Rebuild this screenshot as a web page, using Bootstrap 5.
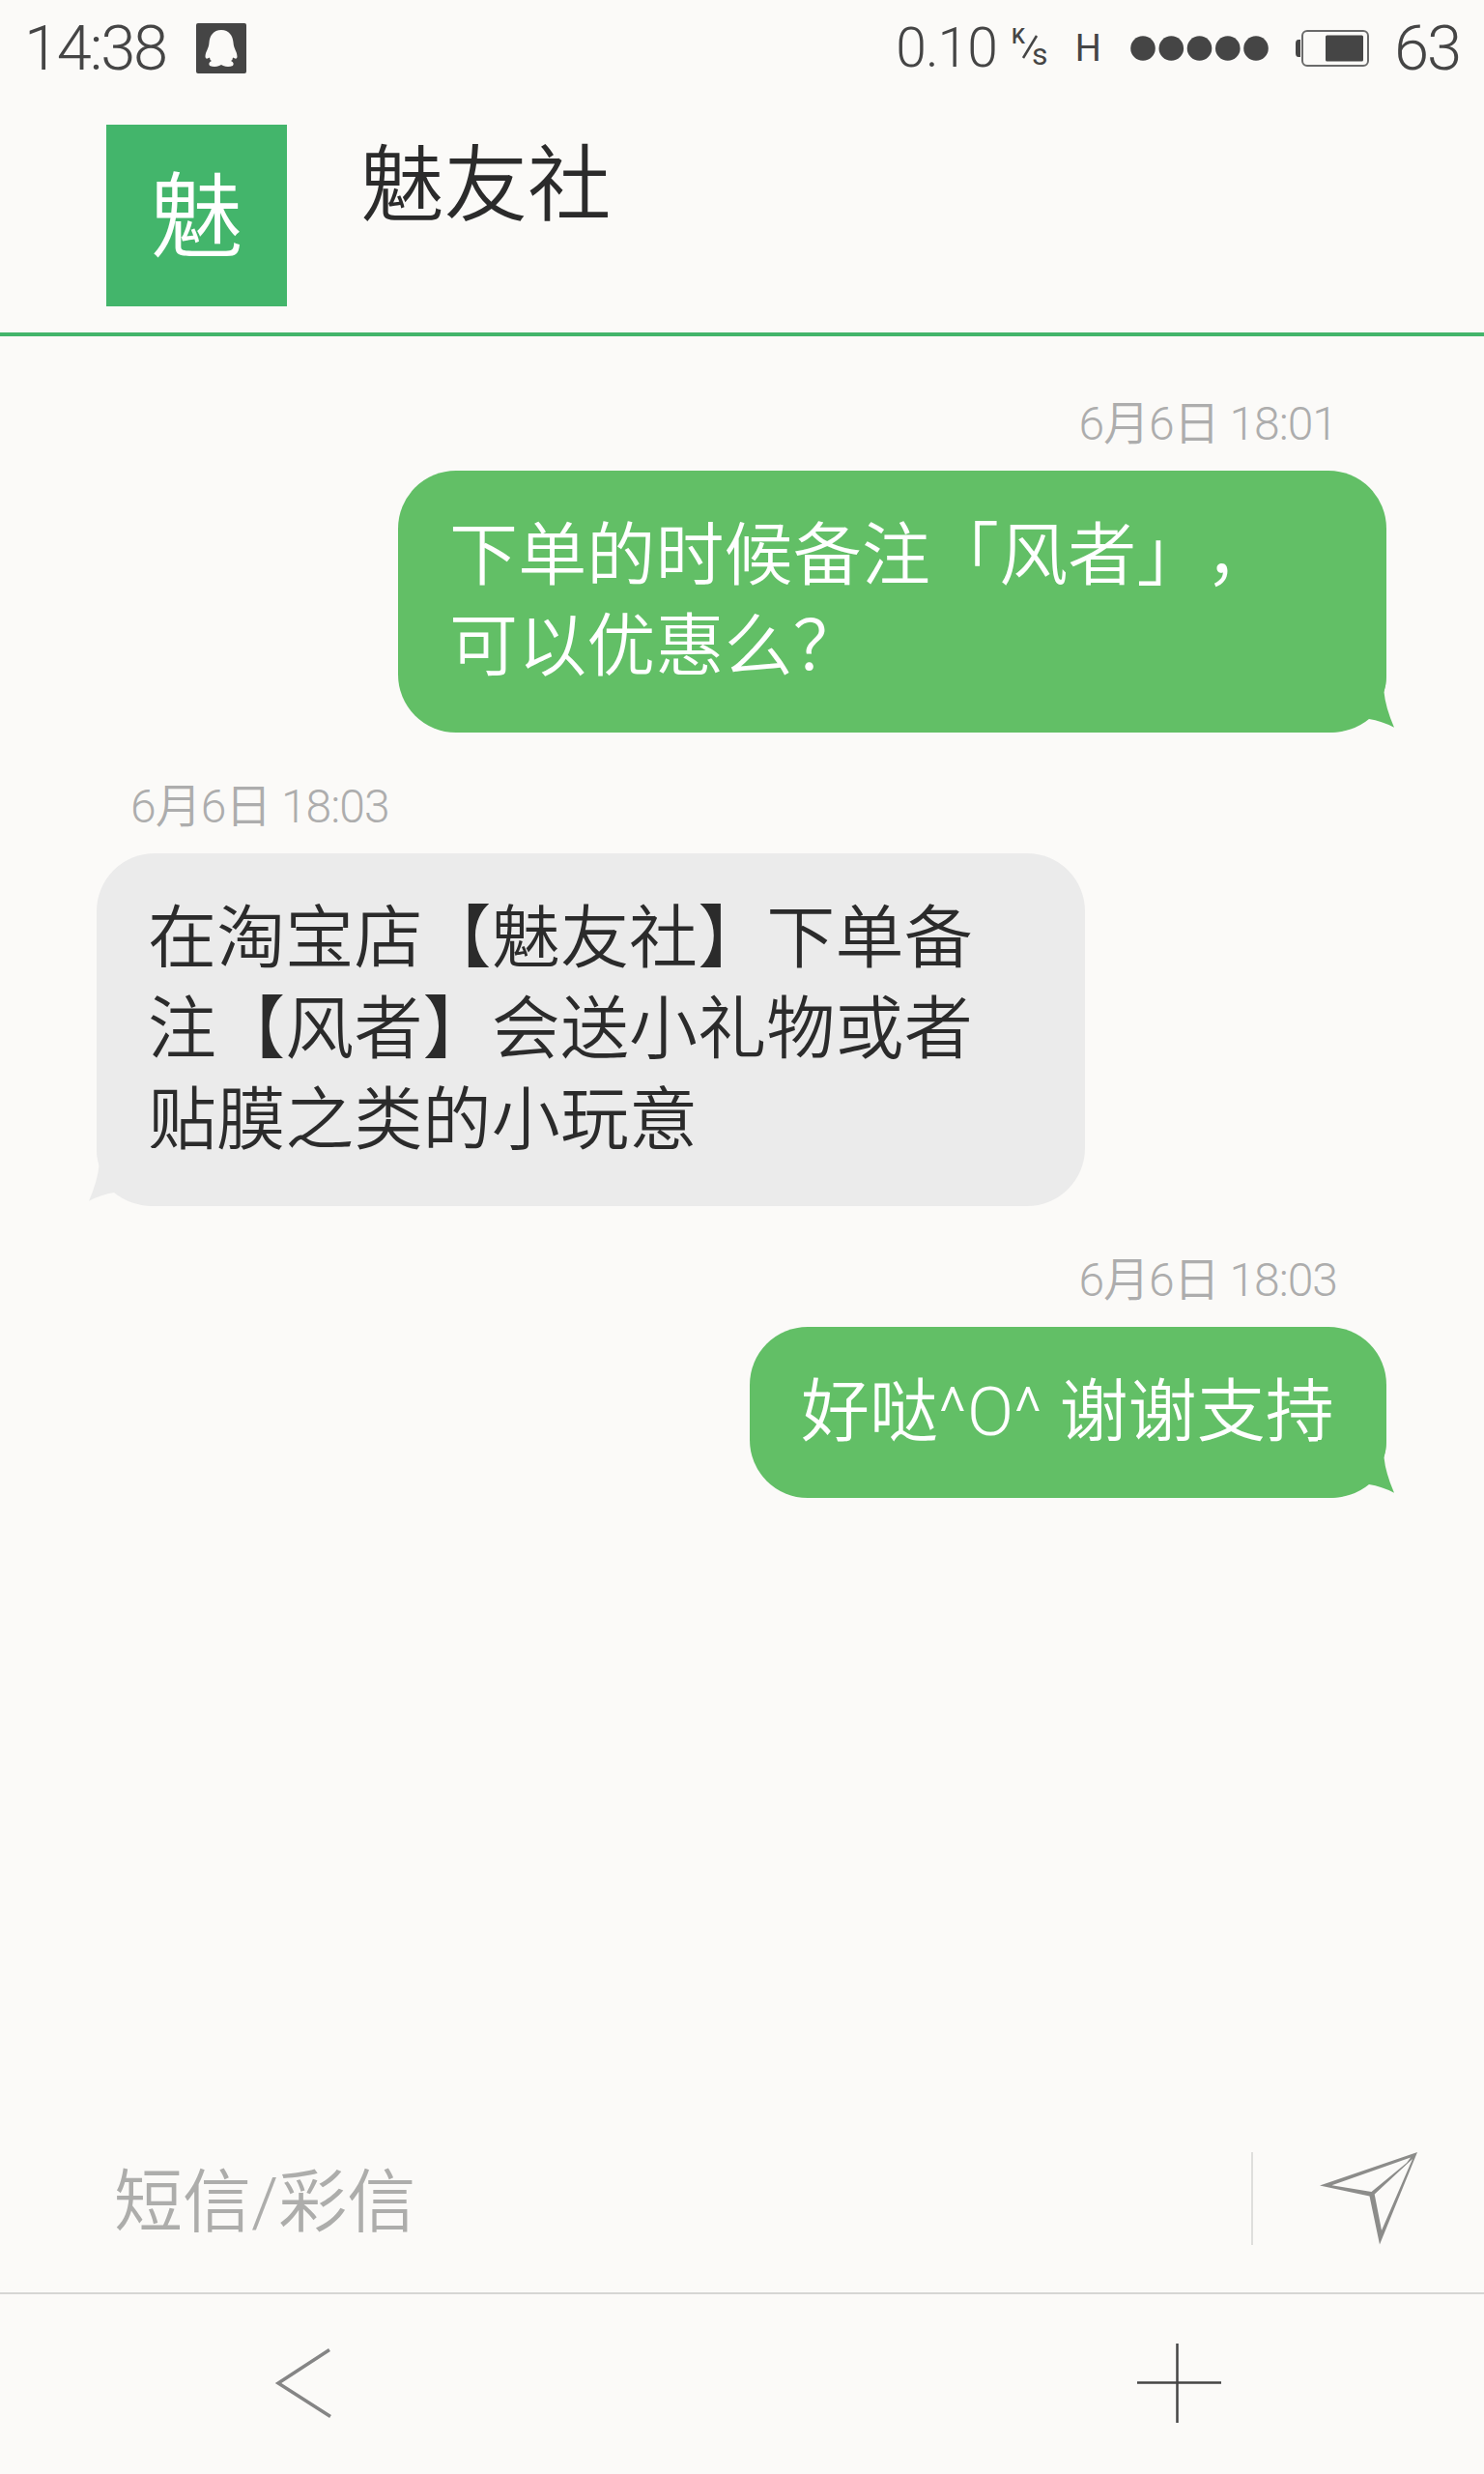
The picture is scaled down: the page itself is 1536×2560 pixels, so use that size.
<!DOCTYPE html>
<html lang="zh-CN">
<head>
<meta charset="utf-8">
<meta name="viewport" content="width=device-width, initial-scale=1">
<title>魅友社</title>
<link href="https://cdn.jsdelivr.net/npm/bootstrap@5.3.0/dist/css/bootstrap.min.css" rel="stylesheet">
<style>
  :root { --ink: #2b2b2b; --status: #454545; --brand: #43b56b; --sent: #62bf66; --received: #ebebeb; --paper: #fbfaf8; }
  body { background: var(--paper); color: var(--ink); font-family: Roboto, "Noto Sans CJK SC DemiLight", "Noto Sans CJK SC", sans-serif; font-weight: 350; text-spacing-trim: space-all; }
  .phone { width: 1536px; height: 2560px; }
  svg { display: block; flex: none; }

  .status-bar { height: 100px; padding: 0 25px 0 25px; color: var(--status); line-height: 100px; }
  .clock { font-size: 65px; letter-spacing: -2.2px; }
  .qq-badge { margin-left: 31px; }
  .speed { font-size: 57px; line-height: 96px; letter-spacing: -1px; }
  .speed-unit { margin: 0 18px 0 11px; }
  .net-type { font-size: 38px; font-weight: 400; }
  .signal { margin: 0 28px 0 30px; }
  .battery { margin-right: 26px; }
  .level { font-size: 65px; letter-spacing: -2px; }

  .chat-head { height: 248px; padding: 29px 110px 0; border-bottom: 4px solid var(--brand); gap: 76px; }
  .avatar { width: 187px; height: 188px; background: var(--brand); font-size: 96px; line-height: 192px; }
  .chat-title { font-size: 86.5px; line-height: 128px; font-weight: inherit; }

  .thread { padding: 61px 101px 0 100px; }
  .stamp { font-size: 48px; line-height: 60px; color: #adadad; margin-bottom: 18px; white-space: nowrap; letter-spacing: -1px; }
  .message + .message { margin-top: 47px; }
  .message.sent .stamp { padding-right: 51px; }
  .message.received .stamp { padding-left: 35px; }
  .bubble { max-width: 1023px; padding: 41px 54px 42px 53px; border-radius: 60px; font-size: 71px; line-height: 94px; letter-spacing: .15px; }
  .sent .bubble { background: var(--sent); color: #fff; }
  .received .bubble { background: var(--received); }
  .tail { position: absolute; bottom: 0; width: 80px; height: 60px; }
  .sent .tail { right: -9px; color: var(--sent); }
  .received .tail { left: -9px; color: var(--received); transform: scaleX(-1); }

  .composer { height: 192px; padding: 0 69px 4px 118px; border-bottom: 2px solid #d6d6d4; }
  .composer-text { font-size: 71px; line-height: 94px; padding-top: 7px; color: #adadab; }
  .rule { width: 2px; height: 96px; background: #dededc; margin-right: 69px; }
  .nav-keys { height: 186px; padding: 0 272px 2px 284px; }
</style>
</head>
<body>
<div class="phone d-flex flex-column overflow-hidden">
  <header>
    <div class="status-bar d-flex justify-content-between align-items-center">
      <div class="d-flex align-items-center">
        <span class="clock">14:38</span>
        <svg class="qq-badge" width="52" height="52" viewBox="0 0 52 52">
          <rect width="52" height="52" rx="2" fill="#454545"/>
          <path fill="#fbfaf8" d="M26 7C18 7 14 13 13.500 20C13 27 9.500 29 9.500 35Q10 38 14 35.500Q14 38 16 39Q12 41 14 44Q19 46 24 44L26 43L28 44Q33 46 38 44Q40 41 36 39Q38 38 38 35.500Q42 38 42.500 35C42.500 29 39 27 38.500 20C38 13 34 7 26 7z"/>
        </svg>
      </div>
      <div class="d-flex align-items-center">
        <span class="speed">0.10</span>
        <svg class="speed-unit" width="52" height="64" viewBox="-4 -9 52 64">
          <text x="0" y="18" font-size="22" font-weight="500" fill="#454545">K</text>
          <path d="M12 33 26 10" stroke="#454545" stroke-width="2.500"/>
          <text x="21" y="40" font-size="32" font-weight="400" fill="#454545">s</text>
        </svg>
        <span class="net-type">H</span>
        <svg class="signal" width="143" height="26" viewBox="0 0 143 26" fill="#454545">
          <circle cx="13" cy="13" r="12.8"/><circle cx="42.3" cy="13" r="12.8"/><circle cx="71.5" cy="13" r="12.8"/><circle cx="100.8" cy="13" r="12.8"/><circle cx="130" cy="13" r="12.8"/>
        </svg>
        <svg class="battery" width="76" height="38" viewBox="0 0 76 38">
          <path d="M5 10v18H3q-3 0-3-4V14q0-4 3-4z" fill="#454545"/>
          <rect x="7" y="1" width="68" height="36" rx="5" fill="none" stroke="#6a6a6a" stroke-width="2"/>
          <rect x="31" y="5.500" width="39" height="27" rx="1.500" fill="#454545"/>
        </svg>
        <span class="level">63</span>
      </div>
    </div>
    <div class="chat-head d-flex align-items-start">
      <div class="avatar text-white text-center">魅</div>
      <h1 class="chat-title m-0">魅友社</h1>
    </div>
  </header>

  <main class="thread flex-grow-1">
    <section class="message sent d-flex flex-column align-items-end">
      <div class="stamp">6月6日 18:01</div>
      <div class="bubble position-relative">下单的时候备注「风者」，可以优惠么？
        <svg class="tail" viewBox="0 0 80 60"><path fill="#fbfaf8" d="M71 0h9v60H11C34 60 45 54 56 44L71 20z"/><path fill="currentColor" d="M0 0H71Q71 10 68.500 18Q70 34 79 54.700Q66 48 53 46Q36 60 11 60H0z"/></svg>
      </div>
    </section>
    <section class="message received d-flex flex-column align-items-start">
      <div class="stamp">6月6日 18:03</div>
      <div class="bubble position-relative">在淘宝店【魅友社】下单备注【风者】会送小礼物或者贴膜之类的小玩意
        <svg class="tail" viewBox="0 0 80 60"><path fill="#fbfaf8" d="M71 0h9v60H11C34 60 45 54 56 44L71 20z"/><path fill="currentColor" d="M0 0H71Q71 10 68.500 18Q70 34 79 54.700Q66 48 53 46Q36 60 11 60H0z"/></svg>
      </div>
    </section>
    <section class="message sent d-flex flex-column align-items-end">
      <div class="stamp">6月6日 18:03</div>
      <div class="bubble position-relative">好哒^O^ 谢谢支持
        <svg class="tail" viewBox="0 0 80 60"><path fill="#fbfaf8" d="M71 0h9v60H11C34 60 45 54 56 44L71 20z"/><path fill="currentColor" d="M0 0H71Q71 10 68.500 18Q70 34 79 54.700Q66 48 53 46Q36 60 11 60H0z"/></svg>
      </div>
    </section>
  </main>

  <footer>
    <div class="composer d-flex align-items-center">
      <div class="composer-text flex-grow-1">短信/彩信</div>
      <div class="rule"></div>
      <svg width="101" height="96" viewBox="0 0 101 96" fill="#8c8c8a" fill-rule="evenodd">
        <path d="M0 34.500 101 0 62 95.500 51.500 45.500zM12.500 34.200 53.500 41 90 11 94 5.500zM56.700 43.500 64 81 96 7 90 12.500z"/>
      </svg>
    </div>
    <nav class="nav-keys d-flex justify-content-between align-items-center">
      <svg width="60" height="74" viewBox="0 0 60 74" fill="none" stroke="#858585" stroke-width="3.500"><path d="M57 2.500 4 37 58 71.500"/></svg>
      <svg width="87" height="82" viewBox="0 0 87 82" fill="none" stroke="#454545" stroke-width="2.500"><path d="M0 40.500H87M41.500 0V82"/></svg>
    </nav>
  </footer>
</div>
<script src="https://cdn.jsdelivr.net/npm/bootstrap@5.3.0/dist/js/bootstrap.bundle.min.js"></script>
</body>
</html>
